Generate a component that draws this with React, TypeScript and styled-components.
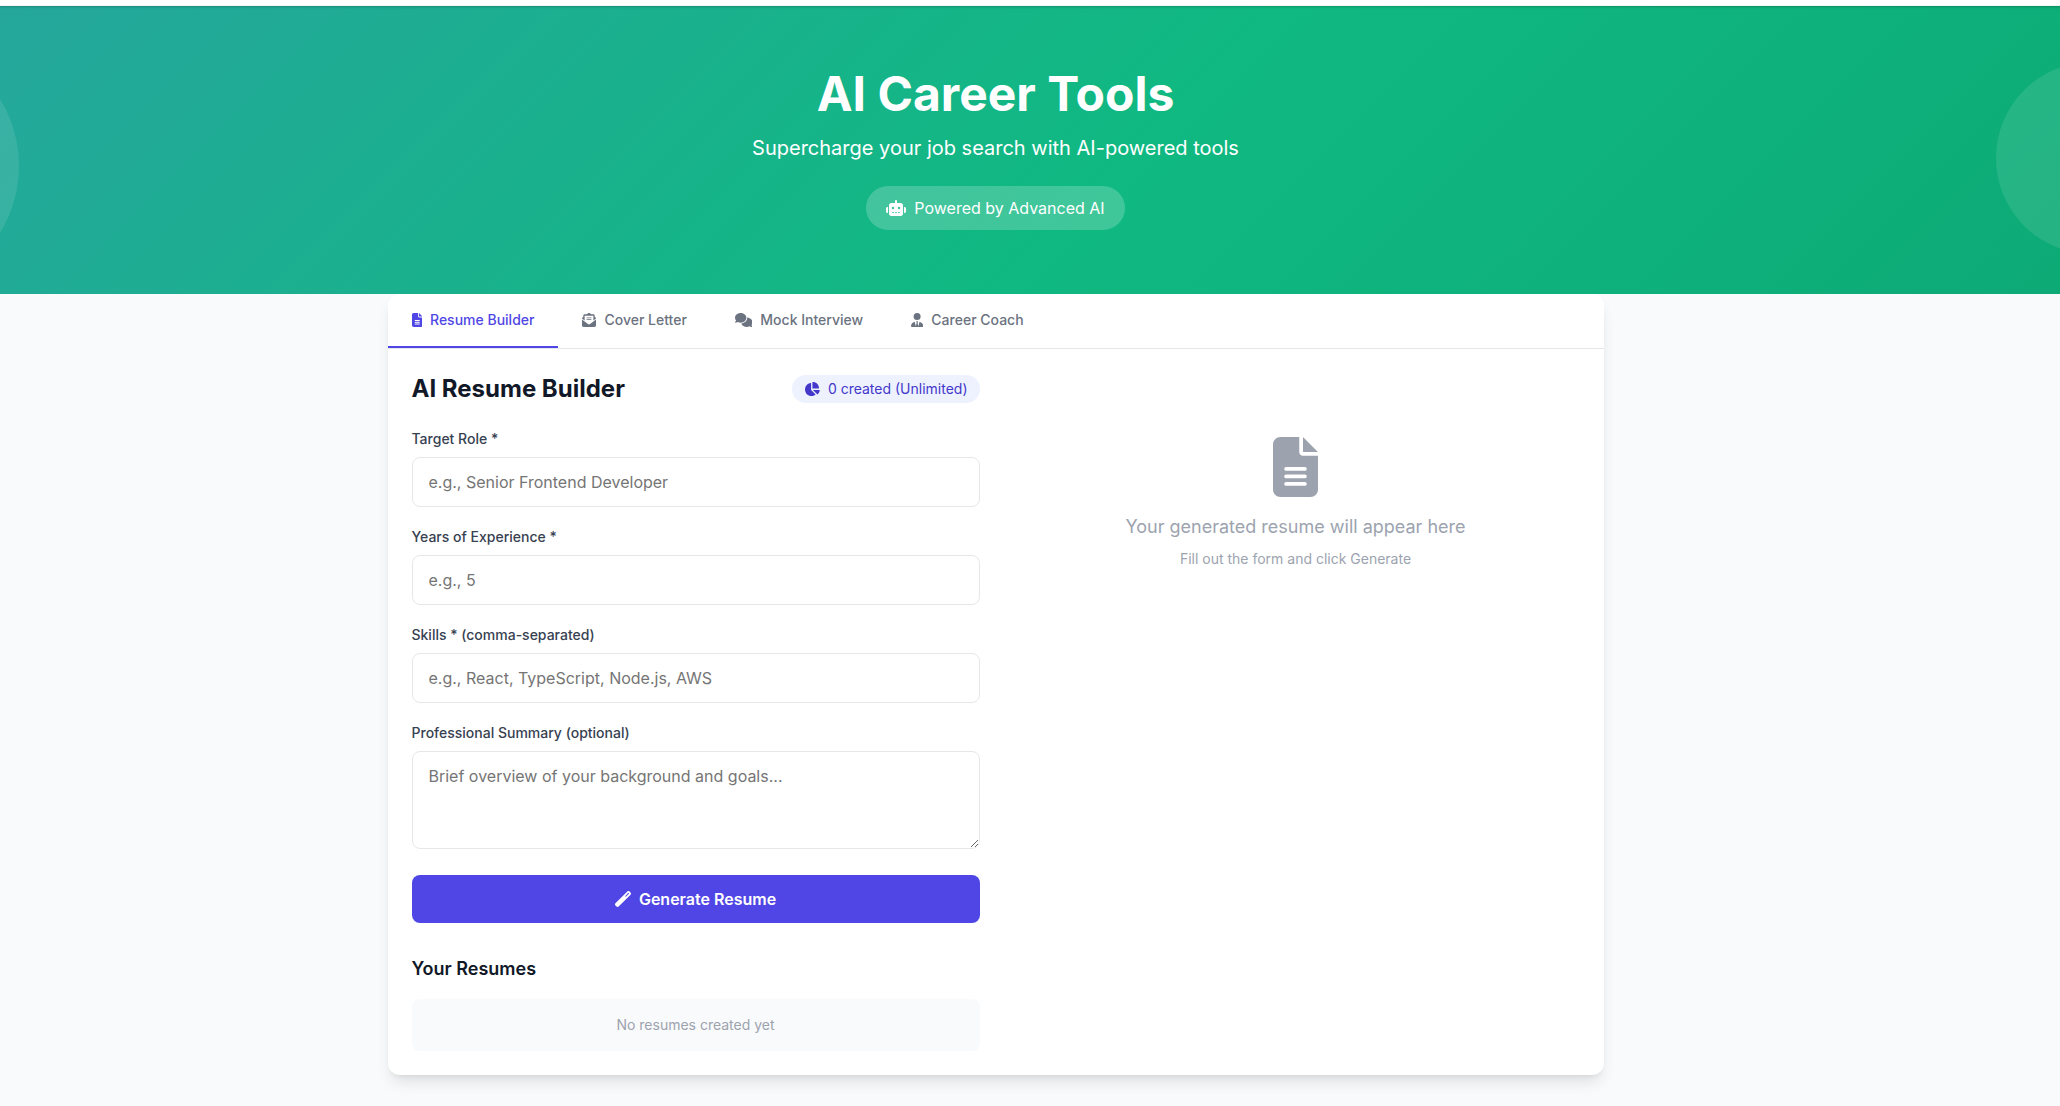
import React from "react";
import styled, { createGlobalStyle } from "styled-components";
import {
  FaChartPie,
  FaComments,
  FaEnvelopeOpenText,
  FaFileLines,
  FaRobot,
  FaUserTie,
  FaWandMagic,
} from "react-icons/fa6";

const GlobalStyle = createGlobalStyle`
  *, *::before, *::after { box-sizing: border-box; }
  body {
    margin: 0;
    background: #f9fafb;
    color: #111827;
    font-family: Inter, "Liberation Sans", sans-serif;
    font-size: 16px;
    line-height: 24px;
  }
  h1, h2, h3, p { margin: 0; }
  button, input, textarea { font: inherit; }
`;

const gutter = "69px";

const Page = styled.div`
  min-height: 100vh;
  overflow: hidden;
`;

const NavEdge = styled.header`
  position: relative;
  z-index: 1;
  height: 6px;
  background: #ffffff;
  border-bottom: 1px solid #f3f4f6;
  box-shadow: 0 1px 3px rgba(0, 0, 0, 0.1), 0 1px 2px rgba(0, 0, 0, 0.1);
`;

const Hero = styled.section`
  position: relative;
  overflow: hidden;
  display: flex;
  flex-direction: column;
  align-items: center;
  padding: 64px ${gutter} 64px 0;
  color: #ffffff;
  text-align: center;
  background: linear-gradient(135deg, #25a79c 0%, #10b981 55%, #0daa76 100%);
`;

const Bubble = styled.span<{ $size: number; $top: number; $side: "left" | "right"; $offset: number }>`
  position: absolute;
  top: ${(p) => p.$top}px;
  ${(p) => p.$side}: ${(p) => p.$offset}px;
  width: ${(p) => p.$size}px;
  height: ${(p) => p.$size}px;
  border-radius: 50%;
  background: rgba(255, 255, 255, 0.1);
`;

const HeroTitle = styled.h1`
  margin-bottom: 16px;
  font-size: 48px;
  line-height: 48px;
  font-weight: 700;
`;

const HeroText = styled.p`
  margin-bottom: 24px;
  font-size: 20px;
  line-height: 28px;
`;

const HeroPill = styled.div`
  display: flex;
  align-items: center;
  gap: 8px;
  padding: 10px 20px;
  border-radius: 999px;
  background: rgba(255, 255, 255, 0.2);
  svg { width: 20px; height: 16px; }
`;

const Main = styled.main`
  padding: 0 ${gutter} 31px 0;
`;

const Card = styled.div`
  max-width: 1216px;
  margin: 0 auto;
  border-radius: 12px;
  background: #ffffff;
  box-shadow: 0 10px 15px -3px rgba(0, 0, 0, 0.1), 0 4px 6px -4px rgba(0, 0, 0, 0.1);
`;

const Tabs = styled.nav`
  display: flex;
  border-bottom: 1px solid #e5e7eb;
`;

const Tab = styled.button<{ $active: boolean; $ratio: string }>`
  display: flex;
  align-items: center;
  gap: 8px;
  padding: 16px 24px;
  border: 0;
  border-bottom: 2px solid ${(p) => (p.$active ? "#4f46e5" : "transparent")};
  background: none;
  color: ${(p) => (p.$active ? "#4f46e5" : "#6b7280")};
  font-size: 14px;
  line-height: 20px;
  font-weight: 500;
  cursor: pointer;
  svg {
    width: auto;
    height: 14px;
    aspect-ratio: ${(p) => p.$ratio};
  }
`;

const Columns = styled.div`
  display: grid;
  grid-template-columns: 1fr 1fr;
  gap: 32px;
  padding: 24px;
`;

const PanelHead = styled.div`
  display: flex;
  align-items: center;
  justify-content: space-between;
  margin-bottom: 24px;
`;

const PanelTitle = styled.h2`
  font-size: 24px;
  line-height: 32px;
  font-weight: 700;
`;

const Usage = styled.span`
  display: flex;
  align-items: center;
  gap: 8px;
  padding: 4px 12px;
  border-radius: 999px;
  background: #eef2ff;
  color: #4338ca;
  font-size: 14px;
  line-height: 20px;
  svg { width: 16px; height: 14px; }
`;

const Form = styled.form`
  display: flex;
  flex-direction: column;
  gap: 20px;
`;

const Label = styled.label`
  display: block;
  margin-bottom: 8px;
  color: #374151;
  font-size: 14px;
  line-height: 20px;
  font-weight: 500;
`;

const Input = styled.input`
  display: block;
  width: 100%;
  height: 50px;
  padding: 12px 16px;
  border: 1px solid #e5e7eb;
  border-radius: 8px;
  background: #ffffff;
  &::placeholder { color: #757575; }
`;

const TextArea = styled.textarea`
  width: 100%;
  padding: 12px 16px;
  border: 1px solid #e5e7eb;
  border-radius: 8px;
  background: #ffffff;
  resize: vertical;
  &::placeholder { color: #757575; }
`;

const Submit = styled.button`
  display: flex;
  align-items: center;
  justify-content: center;
  gap: 8px;
  padding: 12px 24px;
  border: 0;
  border-radius: 8px;
  background: #4f46e5;
  color: #ffffff;
  font-weight: 600;
  cursor: pointer;
`;

const ListTitle = styled.h3`
  margin: 32px 0 16px;
  font-size: 18px;
  line-height: 28px;
  font-weight: 600;
`;

const EmptyList = styled.p`
  padding: 16px;
  border-radius: 8px;
  background: #f9fafb;
  color: #9ca3af;
  font-size: 14px;
  line-height: 20px;
  text-align: center;
`;

const Preview = styled.section`
  display: flex;
  flex-direction: column;
  align-items: center;
  padding: 64px 0;
  color: #9ca3af;
  text-align: center;
  svg { width: 45px; height: 60px; margin-bottom: 16px; }
`;

const PreviewTitle = styled.p`
  margin-bottom: 8px;
  font-size: 18px;
  line-height: 28px;
`;

const PreviewHint = styled.p`
  font-size: 14px;
  line-height: 20px;
`;

const tabs = [
  { label: "Resume Builder", Icon: FaFileLines, ratio: "3 / 4" },
  { label: "Cover Letter", Icon: FaEnvelopeOpenText, ratio: "1 / 1" },
  { label: "Mock Interview", Icon: FaComments, ratio: "5 / 4" },
  { label: "Career Coach", Icon: FaUserTie, ratio: "7 / 8" },
];

const fields = [
  { id: "role", label: "Target Role *", placeholder: "e.g., Senior Frontend Developer" },
  { id: "years", label: "Years of Experience *", placeholder: "e.g., 5" },
  { id: "skills", label: "Skills * (comma-separated)", placeholder: "e.g., React, TypeScript, Node.js, AWS" },
];

export default function App() {
  const [active, setActive] = React.useState(tabs[0].label);
  return (
    <Page>
      <GlobalStyle />
      <NavEdge />
      <Hero>
        <Bubble $size={256} $top={32} $side="left" $offset={-237} />
        <Bubble $size={192} $top={56} $side="right" $offset={-128} />
        <HeroTitle>AI Career Tools</HeroTitle>
        <HeroText>Supercharge your job search with AI-powered tools</HeroText>
        <HeroPill>
          <FaRobot />
          <span>Powered by Advanced AI</span>
        </HeroPill>
      </Hero>
      <Main>
        <Card>
          <Tabs>
            {tabs.map(({ label, Icon, ratio }) => (
              <Tab
                key={label}
                type="button"
                $active={label === active}
                $ratio={ratio}
                onClick={() => setActive(label)}
              >
                <Icon />
                {label}
              </Tab>
            ))}
          </Tabs>
          <Columns>
            <section>
              <PanelHead>
                <PanelTitle>AI Resume Builder</PanelTitle>
                <Usage>
                  <FaChartPie />
                  0 created (Unlimited)
                </Usage>
              </PanelHead>
              <Form onSubmit={(e) => e.preventDefault()}>
                {fields.map((f) => (
                  <div key={f.id}>
                    <Label htmlFor={f.id}>{f.label}</Label>
                    <Input id={f.id} type="text" placeholder={f.placeholder} />
                  </div>
                ))}
                <div>
                  <Label htmlFor="summary">Professional Summary (optional)</Label>
                  <TextArea id="summary" rows={3} placeholder="Brief overview of your background and goals..." />
                </div>
                <Submit type="submit">
                  <FaWandMagic />
                  Generate Resume
                </Submit>
              </Form>
              <ListTitle>Your Resumes</ListTitle>
              <EmptyList>No resumes created yet</EmptyList>
            </section>
            <Preview>
              <FaFileLines />
              <PreviewTitle>Your generated resume will appear here</PreviewTitle>
              <PreviewHint>Fill out the form and click Generate</PreviewHint>
            </Preview>
          </Columns>
        </Card>
      </Main>
    </Page>
  );
}
